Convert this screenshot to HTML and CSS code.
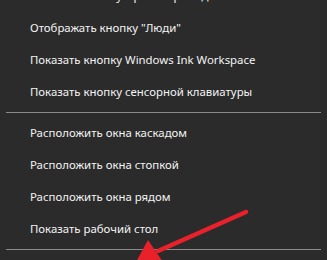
FILE: index.html
```html
<!DOCTYPE html>
<html lang="ru">

<head>
  <meta charset="UTF-8">
  <title>Контекстное меню панели задач</title>
  <link rel="stylesheet" href="styles.css">
</head>

<body>
  <ul class="menu">
    <li class="item">Показать кнопку Просмотра задач</li>
    <li class="item">Отображать кнопку "Люди"</li>
    <li class="item">Показать кнопку Windows Ink Workspace</li>
    <li class="item">Показать кнопку сенсорной клавиатуры</li>
    <li class="sep"></li>
    <li class="item">Расположить окна каскадом</li>
    <li class="item">Расположить окна стопкой</li>
    <li class="item">Расположить окна рядом</li>
    <li class="item">Показать рабочий стол</li>
    <li class="sep"></li>
  </ul>

  <!-- red pointer arrow drawn over the menu -->
  <svg class="arrow" width="327" height="260" viewBox="0 0 327 260">
    <line x1="246" y1="212" x2="158" y2="251" stroke="#e8212b" stroke-width="4.5" stroke-linecap="round" />
    <polygon points="136,262 148,240 163,262" fill="#e8212b" />
  </svg>
</body>

</html>
```

FILE: styles.css
```css
body {
  margin: 0;
  width: 327px;
  height: 260px;
  overflow: hidden;
  background: #2b2b2b;
  font-family: 'Noto Sans', 'Open Sans', sans-serif;
  position: relative;
}

.menu {
  list-style: none;
  margin: -20px 0 0;
  padding: 0;
}

.item {
  height: 32px;
  line-height: 32px;
  padding-left: 30px;
  font-size: 11.4px;
  color: #f4f4f4;
  white-space: nowrap;
}

.sep {
  height: 9px;
  display: flex;
  align-items: center;
  padding: 0 6px;
}

.sep::before {
  content: '';
  flex: 1;
  height: 1px;
  background: #8a8a8a;
}

.arrow {
  position: absolute;
  left: 0;
  top: 0;
}
```
